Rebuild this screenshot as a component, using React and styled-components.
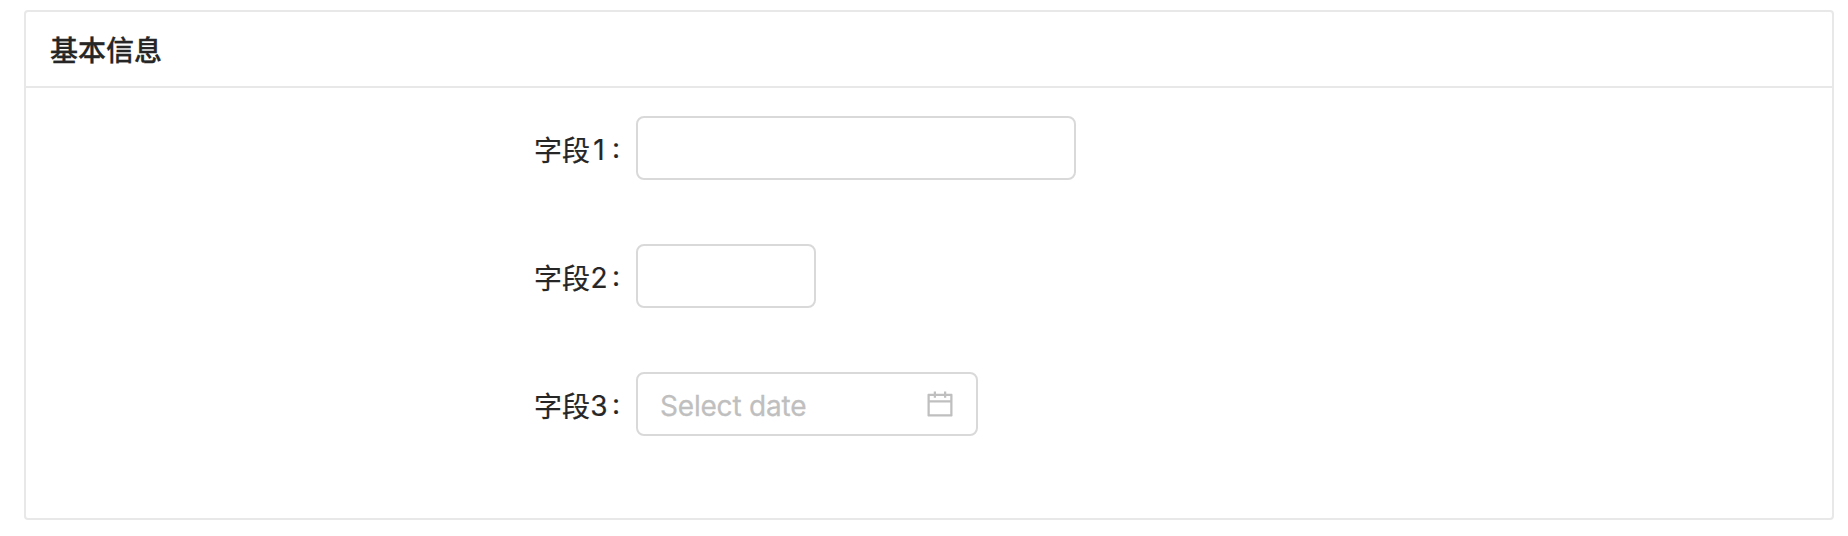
import React from "react";
import styled, { createGlobalStyle } from "styled-components";

const GlobalStyle = createGlobalStyle`
  * { box-sizing: border-box; }
  body {
    margin: 0;
    background: #fff;
    color: #262626;
    font-family: Inter, "Noto Sans CJK SC", sans-serif;
    font-size: 28px;
    line-height: 44px;
  }
`;

const Page = styled.main`
  height: 536px;
  padding: 10px 14px 16px 24px;
`;

const Card = styled.section`
  height: 510px;
  border: 2px solid #e8e8e8;
  border-radius: 4px;
`;

const CardHeader = styled.header`
  height: 76px;
  padding: 17px 24px 0;
  border-bottom: 2px solid #e8e8e8;
`;

const CardTitle = styled.h2`
  margin: 0;
  font-size: 28px;
  line-height: 44px;
  font-weight: 500;
  -webkit-text-stroke: 0.3px currentColor;
`;

const Form = styled.form`
  display: flex;
  flex-direction: column;
  gap: 64px;
  padding: 28px 0 0 508px;
`;

const FormItem = styled.div`
  display: flex;
  height: 64px;
`;

const Label = styled.label`
  display: flex;
  width: 102px;
  padding-top: 13px;
  white-space: nowrap;
  -webkit-text-stroke: 0.2px currentColor;
`;

const Digit = styled.span`
  width: 18px;
  margin-top: -1px;
  text-align: center;
`;

const Colon = styled.span`
  margin: -3px 0 0 4px;
`;

const Field = styled.div`
  display: flex;
  align-items: center;
  width: ${(p) => p.$width}px;
  height: 64px;
  padding: 0 22px;
  border: 2px solid #d9d9d9;
  border-radius: 8px;
`;

const Input = styled.input`
  flex: 1;
  min-width: 0;
  height: 44px;
  padding: 4px 0 0;
  border: 0;
  outline: 0;
  background: transparent;
  font: inherit;
  color: inherit;
  letter-spacing: -0.2px;
  &::placeholder {
    color: #bfbfbf;
    opacity: 1;
    -webkit-text-stroke: 0.3px #bfbfbf;
  }
`;

const Icon = styled.svg`
  flex: none;
  width: 28px;
  height: 28px;
  fill: #bfbfbf;
`;

function CalendarIcon() {
  return (
    <Icon viewBox="64 64 896 896" aria-hidden="true">
      <path d="M880 184H712v-64c0-4.4-3.6-8-8-8h-56c-4.4 0-8 3.6-8 8v64H384v-64c0-4.4-3.6-8-8-8h-56c-4.4 0-8 3.6-8 8v64H144c-17.7 0-32 14.3-32 32v664c0 17.7 14.3 32 32 32h736c17.7 0 32-14.3 32-32V216c0-17.7-14.3-32-32-32zm-40 656H184V460h656v380zM184 392V256h128v48c0 4.4 3.6 8 8 8h56c4.4 0 8-3.6 8-8v-48h256v48c0 4.4 3.6 8 8 8h56c4.4 0 8-3.6 8-8v-48h128v136H184z" />
    </Icon>
  );
}

const fields = [
  { id: 1, width: 440 },
  { id: 2, width: 180 },
  { id: 3, width: 342, placeholder: "Select date", icon: true },
];

export default function App() {
  return (
    <Page>
      <GlobalStyle />
      <Card>
        <CardHeader>
          <CardTitle>基本信息</CardTitle>
        </CardHeader>
        <Form>
          {fields.map((f) => (
            <FormItem key={f.id}>
              <Label htmlFor={`field-${f.id}`}>
                字段<Digit>{f.id}</Digit>
                <Colon>:</Colon>
              </Label>
              <Field $width={f.width}>
                <Input id={`field-${f.id}`} placeholder={f.placeholder} />
                {f.icon && <CalendarIcon />}
              </Field>
            </FormItem>
          ))}
        </Form>
      </Card>
    </Page>
  );
}
